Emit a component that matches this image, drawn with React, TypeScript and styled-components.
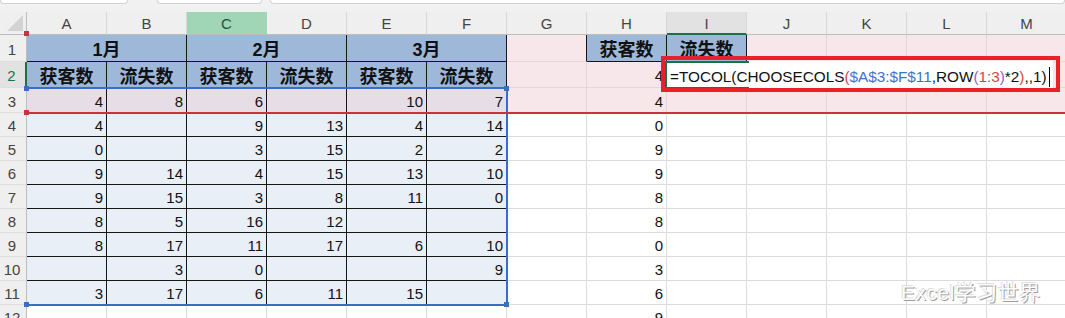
import React from "react";
import styled, { createGlobalStyle } from "styled-components";

const BLUE = "#9db8d9";
const PALE = "#e9eff7";
const LILAC = "#e7dde7";
const PINK = "#f8e7ea";
const INK = "#161616";
const GRID = "#dcdcdc";
const PINK_GRID = "#e8d5d9";
const GREEN = "#1e7145";
const SANS = `"Liberation Sans", Arial, "Noto Sans CJK SC", sans-serif`;

const LETTERS = "ABCDEFGHIJKLM".split("");

// A..F for rows 3..11
const DATA: (number | null)[][] = [
  [4, 8, 6, null, 10, 7],
  [4, null, 9, 13, 4, 14],
  [0, null, 3, 15, 2, 2],
  [9, 14, 4, 15, 13, 10],
  [9, 15, 3, 8, 11, 0],
  [8, 5, 16, 12, null, null],
  [8, 17, 11, 17, 6, 10],
  [null, 3, 0, null, null, 9],
  [3, 17, 6, 11, 15, null],
];

// column H, rows 2..12
const H_COL: Record<number, number> = {
  2: 4, 3: 4, 4: 0, 5: 9, 6: 9, 7: 8, 8: 8, 9: 0, 10: 3, 11: 6, 12: 9,
};

type Spec = {
  t?: string | number | null;
  span?: number;
  fill: string;
  r: string;
  b: string;
  head?: boolean;
};

const blank = (fill: string, line: string): Spec => ({ fill, r: line, b: line });
const header = (t: string, span = 1): Spec => ({ t, span, fill: BLUE, r: INK, b: INK, head: true });

function rowSpecs(n: number): Spec[] {
  if (n === 1) {
    return [
      header("1月", 2),
      header("2月", 2),
      header("3月", 2),
      { fill: PINK, r: INK, b: PINK_GRID },
      header("获客数"),
      header("流失数"),
      ...Array.from({ length: 4 }, () => blank(PINK, PINK_GRID)),
    ];
  }
  if (n === 2) {
    return [
      ...["获客数", "流失数", "获客数", "流失数", "获客数", "流失数"].map((t) => header(t)),
      blank(PINK, PINK_GRID),
      { t: H_COL[2], fill: PINK, r: PINK_GRID, b: PINK_GRID },
      ...Array.from({ length: 5 }, () => blank(PINK, PINK_GRID)),
    ];
  }
  const shaded = n === 3;
  const fill = shaded ? PINK : "#fff";
  const line = shaded ? PINK_GRID : GRID;
  const table: Spec[] =
    n <= 11
      ? DATA[n - 3].map((v) => ({ t: v, fill: shaded ? LILAC : PALE, r: INK, b: INK }))
      : Array.from({ length: 6 }, () => blank("#fff", GRID));
  return [
    ...table,
    blank(fill, line),
    { t: H_COL[n], fill, r: line, b: line },
    ...Array.from({ length: 5 }, () => blank(fill, line)),
  ];
}

const GlobalStyle = createGlobalStyle`
  *, *::before, *::after { box-sizing: border-box; }
  html, body { margin: 0; padding: 0; background: #fff; overflow: hidden; }
  body { font-family: ${SANS}; }
`;

const Window = styled.div`
  width: 1065px;
  height: 318px;
  overflow: hidden;
  background: #fff;
`;

const TopBand = styled.div`
  height: 12px;
  background: #f1f1f1;
  display: flex;
  align-items: flex-start;
`;

const Field = styled.div<{ $w?: number; $gap: number }>`
  flex: ${(p) => (p.$w ? `0 0 ${p.$w}px` : "1 1 auto")};
  margin-left: ${(p) => p.$gap}px;
  height: 4px;
  background: #fff;
  border: 1px solid #d2d2d2;
  border-top: none;
  border-radius: 0 0 5px 5px;
`;

const Sheet = styled.div`
  position: relative;
  display: grid;
  grid-template-columns: 27px repeat(13, 80px);
  grid-template-rows: 23px 27px 26px 25px repeat(9, 24px);
`;

const Corner = styled.div`
  background: #efefef;
  border-right: 1px solid #bdbdbd;
  border-bottom: 1px solid #bdbdbd;
  display: flex;
  align-items: flex-end;
  justify-content: flex-end;
  padding: 0 3px 3px 0;
`;

const Triangle = styled.span`
  width: 0;
  height: 0;
  border-left: 16px solid transparent;
  border-bottom: 16px solid #d3d3d3;
`;

const ColHead = styled.div<{ $lit?: boolean; $cur?: boolean }>`
  background: ${(p) => (p.$lit ? "#a0d6b5" : p.$cur ? "#e2e2e2" : "#efefef")};
  border-right: 1px solid ${(p) => (p.$lit ? "#a0d6b5" : "#d8d8d8")};
  border-bottom: ${(p) => (p.$cur ? `2px solid ${GREEN}` : "1px solid #bdbdbd")};
  color: ${(p) => (p.$lit ? "#24503a" : "#444")};
  font: 15px ${SANS};
  display: flex;
  align-items: center;
  justify-content: center;
  padding-top: 1px;
`;

const RowHead = styled.div<{ $cur?: boolean }>`
  background: ${(p) => (p.$cur ? "#e2e2e2" : "#efefef")};
  border-right: ${(p) => (p.$cur ? `2px solid ${GREEN}` : "1px solid #bdbdbd")};
  border-bottom: 1px solid #dedede;
  color: ${(p) => (p.$cur ? GREEN : "#444")};
  font: 15px ${SANS};
  display: flex;
  align-items: center;
  justify-content: center;
  padding: 2px 2px 0 0;
`;

const Cell = styled.div<{ $span: number; $fill: string; $r: string; $b: string; $head: boolean }>`
  grid-column: span ${(p) => p.$span};
  min-width: 0;
  background: ${(p) => p.$fill};
  border-right: 1px solid ${(p) => p.$r};
  border-bottom: 1px solid ${(p) => p.$b};
  display: flex;
  align-items: center;
  justify-content: ${(p) => (p.$head ? "center" : "flex-end")};
  padding: ${(p) => (p.$head ? "0" : "2px 3px 0 0")};
  font: ${(p) => (p.$head ? "700 18px" : "400 15px")} ${SANS};
  color: #111;
  white-space: nowrap;
  overflow: hidden;
`;

const Handle = styled.span<{ $c: string; $x: "l" | "r"; $y: "t" | "b" }>`
  position: absolute;
  width: 5px;
  height: 5px;
  background: ${(p) => p.$c};
  ${(p) => (p.$x === "l" ? "left: -2px;" : "right: -3px;")}
  ${(p) => (p.$y === "t" ? "top: -3px;" : "bottom: -3px;")}
`;

const RowsRef = styled.div`
  position: absolute;
  left: 26px;
  top: 22px;
  width: 1045px;
  height: 80px;
  border-bottom: 2px solid #c9323f;
  pointer-events: none;
`;

const RangeRef = styled.div`
  position: absolute;
  left: 26px;
  top: 75px;
  width: 482px;
  height: 219px;
  border: 2px solid #3a6ec6;
  border-left: none;
  pointer-events: none;
`;

const Editor = styled.div`
  position: absolute;
  left: 665px;
  top: 49px;
  width: 388px;
  height: 28px;
  background: #fff;
  border-left: 2px solid ${GREEN};
  display: flex;
  align-items: center;
  padding: 4px 0 0 3px;
  font: 15.3px ${SANS};
  color: #111;
  white-space: nowrap;
`;

const ActiveEdge = styled.span<{ $y: "t" | "b" }>`
  position: absolute;
  left: 0;
  ${(p) => (p.$y === "t" ? "top: 0;" : "bottom: 0;")}
  width: 82px;
  height: 2px;
  background: ${GREEN};
`;

const Tok = styled.span<{ $c?: string }>`
  color: ${(p) => p.$c ?? "#111"};
`;

const Caret = styled.span`
  display: inline-block;
  width: 1px;
  height: 20px;
  margin-left: 2px;
  background: #000;
`;

const Callout = styled.div`
  position: absolute;
  left: 661px;
  top: 44px;
  width: 399px;
  height: 36px;
  border: 4px solid #e5222b;
  pointer-events: none;
`;

const Watermark = styled.div`
  position: absolute;
  left: 901px;
  top: 268px;
  font: 21px ${SANS};
  line-height: 1.2;
  color: #fdfdfd;
  text-shadow: 1px 1px 0 #9e9e9e, -1px -1px 0 #dedede;
  letter-spacing: 0.5px;
  white-space: nowrap;
`;

const RED = "#d4444c";
const PURPLE = "#9660bd";
const REF = "#3d72cc";

export default function App() {
  return (
    <Window>
      <GlobalStyle />
      <TopBand>
        <Field $w={128} $gap={0} />
        <Field $w={105} $gap={29} />
        <Field $gap={8} />
      </TopBand>
      <Sheet>
        <Corner>
          <Triangle />
        </Corner>
        {LETTERS.map((l) => (
          <ColHead key={l} $lit={l === "C"} $cur={l === "I"}>
            {l}
          </ColHead>
        ))}
        {Array.from({ length: 12 }, (_, i) => i + 1).map((n) => (
          <React.Fragment key={n}>
            <RowHead $cur={n === 2}>{n}</RowHead>
            {rowSpecs(n).map((s, j) => (
              <Cell
                key={j}
                $span={s.span ?? 1}
                $fill={s.fill}
                $r={s.r}
                $b={s.b}
                $head={!!s.head}
              >
                {s.t ?? ""}
              </Cell>
            ))}
          </React.Fragment>
        ))}

        <RangeRef>
          <Handle $c="#3a6ec6" $x="l" $y="t" />
          <Handle $c="#3a6ec6" $x="r" $y="t" />
          <Handle $c="#3a6ec6" $x="l" $y="b" />
          <Handle $c="#3a6ec6" $x="r" $y="b" />
        </RangeRef>
        <RowsRef>
          <Handle $c="#c9323f" $x="l" $y="t" />
          <Handle $c="#c9323f" $x="l" $y="b" />
        </RowsRef>

        <Editor>
          <ActiveEdge $y="t" />
          <ActiveEdge $y="b" />
          <Tok>=TOCOL(CHOOSECOLS</Tok>
          <Tok $c={RED}>(</Tok>
          <Tok $c={REF}>$A$3:$F$11</Tok>
          <Tok>,ROW</Tok>
          <Tok $c={PURPLE}>(</Tok>
          <Tok $c={RED}>1:3</Tok>
          <Tok $c={PURPLE}>)</Tok>
          <Tok>*2</Tok>
          <Tok $c={RED}>)</Tok>
          <Tok>,,1)</Tok>
          <Caret />
        </Editor>
        <Callout />
        <Watermark>Excel学习世界</Watermark>
      </Sheet>
    </Window>
  );
}
